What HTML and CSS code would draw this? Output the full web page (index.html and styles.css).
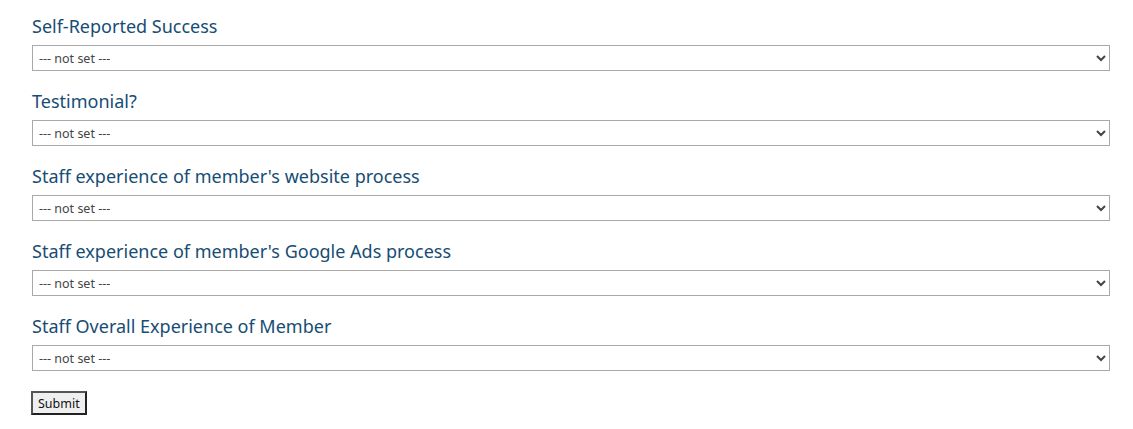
FILE: index.html
```html
<!DOCTYPE html>
<html>
<head>
<meta charset="utf-8">
<link rel="stylesheet" href="styles.css">
</head>
<body>
<form class="form">
  <div class="field">
    <label class="label">Self-Reported Success</label>
    <select class="select"><option>--- not set ---</option></select>
  </div>
  <div class="field">
    <label class="label">Testimonial?</label>
    <select class="select"><option>--- not set ---</option></select>
  </div>
  <div class="field">
    <label class="label">Staff experience of member's website process</label>
    <select class="select"><option>--- not set ---</option></select>
  </div>
  <div class="field">
    <label class="label">Staff experience of member's Google Ads process</label>
    <select class="select"><option>--- not set ---</option></select>
  </div>
  <div class="field">
    <label class="label">Staff Overall Experience of Member</label>
    <select class="select"><option>--- not set ---</option></select>
  </div>
  <button type="button" class="submit">Submit</button>
</form>
</body>
</html>
```
FILE: styles.css
```css
html, body {
  margin: 0;
  padding: 0;
  background: #fff;
}
body {
  font-family: "Noto Sans", "Open Sans", sans-serif;
}
.form {
  padding: 13px 23px 0 32px;
  display: flex;
  flex-direction: column;
  align-items: flex-start;
}
.field {
  display: flex;
  flex-direction: column;
  width: 100%;
  margin-bottom: 17px;
}
.label {
  font-size: 18px;
  line-height: 26px;
  color: #164d74;
  margin-bottom: 6px;
}
.select {
  height: 26px;
  width: 100%;
  box-sizing: border-box;
  border: 1px solid #a9a9a9;
  border-radius: 0;
  background: #fff;
  font-family: "Noto Sans", "Open Sans", sans-serif;
  font-size: 12.5px;
  color: #444;
  padding: 0 2px;
}
.submit {
  font-family: "Noto Sans", "Open Sans", sans-serif;
  font-size: 12.5px;
  color: #111;
  background: #efefef;
  border: 2px solid #333;
  border-color: #555 #222 #222 #555;
  padding: 0 5px;
  height: 24px;
  margin-top: 3px;
  margin-left: -1px;
}
```
